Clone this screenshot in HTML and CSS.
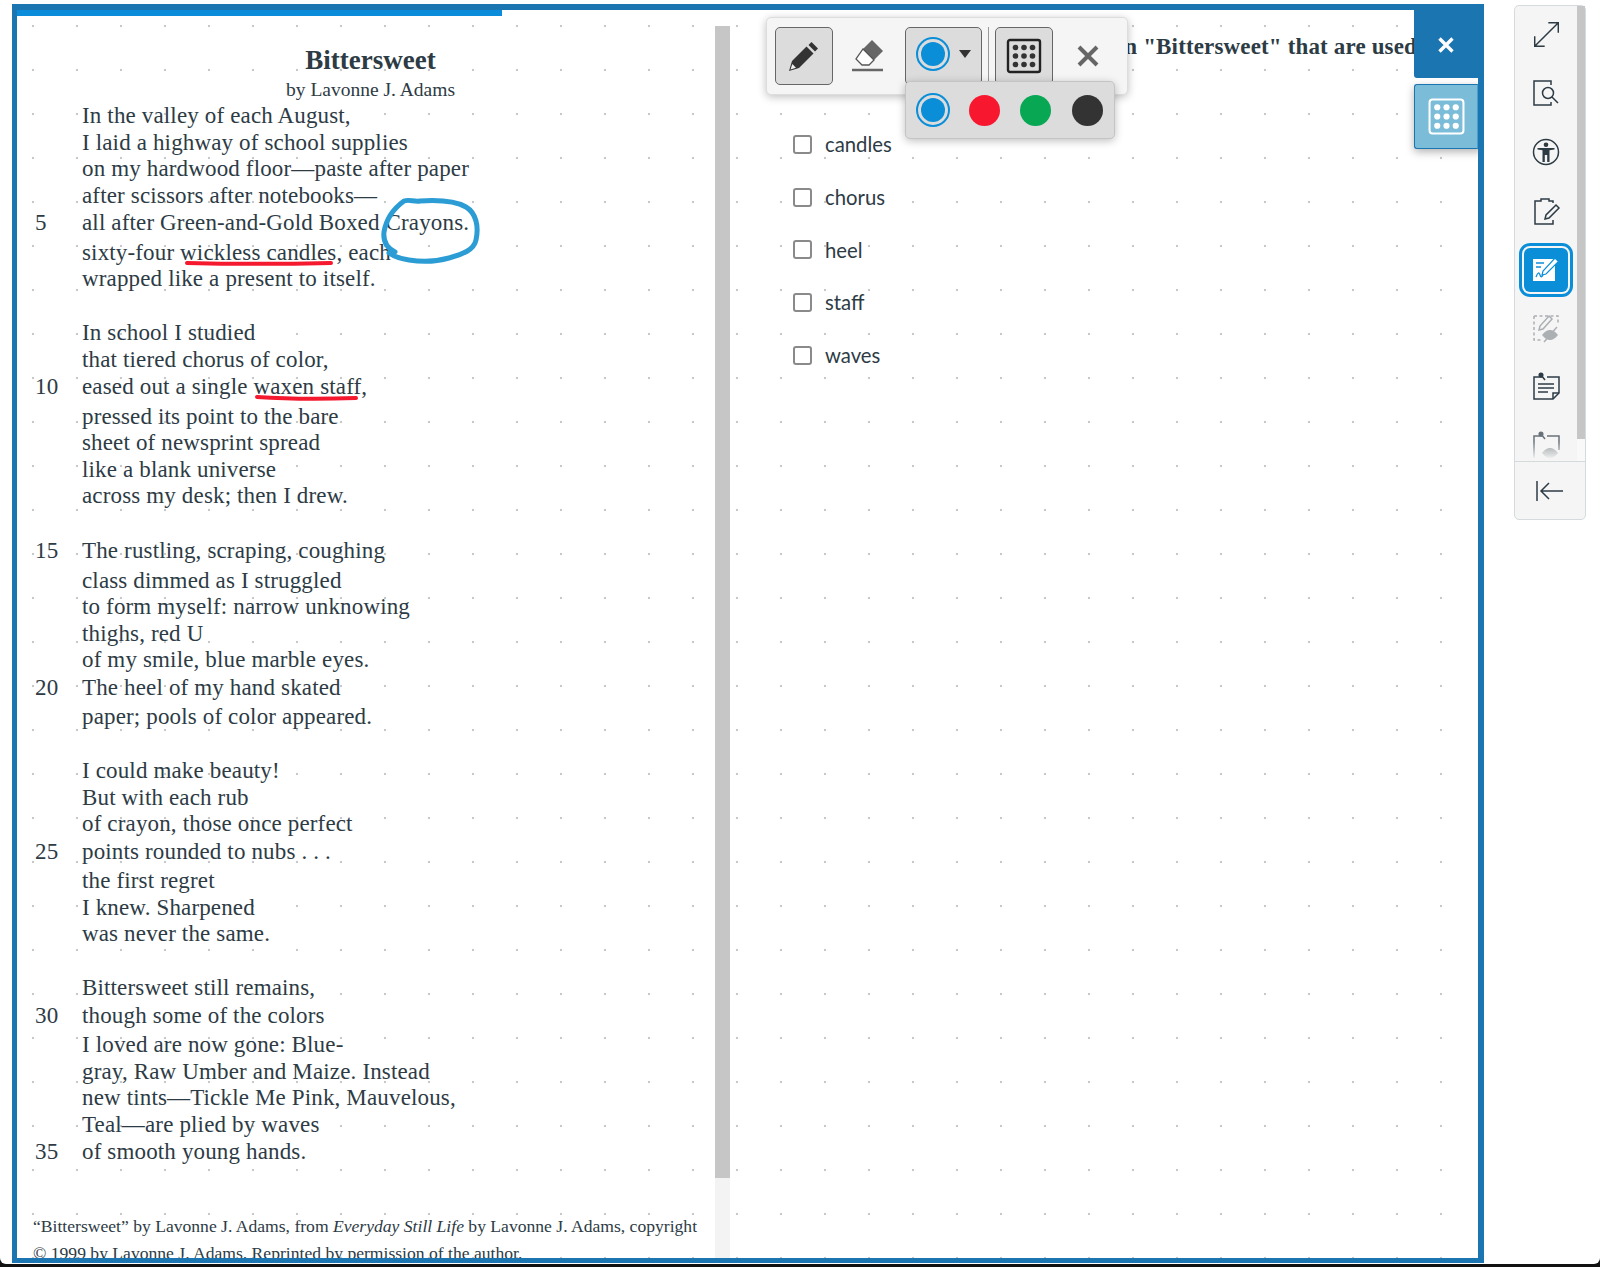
FILE: index.html
```html
<!DOCTYPE html>
<html lang="en">
<head>
  <meta charset="UTF-8">
  <title>Bittersweet</title>
  <link rel="stylesheet" href="styles.css">
</head>
<body>

<div class="screen">
  <!-- Test frame -->
  <div class="frame">
    <div class="progress"><div class="progress-fill"></div></div>
    <div class="panes">

      <!-- Poem -->
      <div class="passage">
        <div class="passage-scroll">
          <h1>Bittersweet</h1>
          <p class="byline">by Lavonne J. Adams</p>
          <div class="poem">
            <div class="line">In the valley of each August,</div>
            <div class="line">I laid a highway of school supplies</div>
            <div class="line">on my hardwood floor—paste after paper</div>
            <div class="line">after scissors after notebooks—</div>
            <div class="line num" data-n="5">all after Green-and-Gold Boxed Crayons.</div>
            <div class="line">sixty-four wickless candles, each</div>
            <div class="line end">wrapped like a present to itself.</div>
            <div class="line">In school I studied</div>
            <div class="line">that tiered chorus of color,</div>
            <div class="line num" data-n="10">eased out a single waxen staff,</div>
            <div class="line">pressed its point to the bare</div>
            <div class="line">sheet of newsprint spread</div>
            <div class="line">like a blank universe</div>
            <div class="line end">across my desk; then I drew.</div>
            <div class="line num" data-n="15">The rustling, scraping, coughing</div>
            <div class="line">class dimmed as I struggled</div>
            <div class="line">to form myself: narrow unknowing</div>
            <div class="line">thighs, red U</div>
            <div class="line">of my smile, blue marble eyes.</div>
            <div class="line num" data-n="20">The heel of my hand skated</div>
            <div class="line end">paper; pools of color appeared.</div>
            <div class="line">I could make beauty!</div>
            <div class="line">But with each rub</div>
            <div class="line">of crayon, those once perfect</div>
            <div class="line num" data-n="25">points rounded to nubs . . .</div>
            <div class="line">the first regret</div>
            <div class="line">I knew. Sharpened</div>
            <div class="line end">was never the same.</div>
            <div class="line">Bittersweet still remains,</div>
            <div class="line num" data-n="30">though some of the colors</div>
            <div class="line">I loved are now gone: Blue-</div>
            <div class="line">gray, Raw Umber and Maize. Instead</div>
            <div class="line">new tints—Tickle Me Pink, Mauvelous,</div>
            <div class="line">Teal—are plied by waves</div>
            <div class="line num" data-n="35">of smooth young hands.</div>
          </div>
          <p class="source">“Bittersweet” by Lavonne J. Adams, from <em>Everyday Still Life</em> by Lavonne J. Adams, copyright © 1999 by Lavonne J. Adams. Reprinted by permission of the author.</p>
        </div>
        <div class="scrollbar"><div class="scrollbar-thumb"></div></div>
      </div>

      <!-- Question -->
      <div class="question">
        <p class="prompt"><span class="prompt-text">Select the words in "Bittersweet" that are used</span></p>
        <div class="choices">
          <label class="choice"><span class="box"></span>candles</label>
          <label class="choice"><span class="box"></span>chorus</label>
          <label class="choice"><span class="box"></span>heel</label>
          <label class="choice"><span class="box"></span>staff</label>
          <label class="choice"><span class="box"></span>waves</label>
        </div>
      </div>
    </div>

    <!-- Pen marks drawn on the passage -->
    <svg class="ink" width="500" height="420" viewBox="0 0 500 420" fill="none" stroke-linecap="round" stroke-linejoin="round">
      <path d="M395 252c-8-4-12-11-11-20 2-12 9-23 20-31 5-2 10 1 16 0 16-1 34-1 46 6 10 6 13 19 10 33-2 10-13 14-27 18-14 4-27 4-40 2-8-1-14-3-20-7" stroke="#2b9cd4" stroke-width="5"/>
      <path d="M187 263c40 1 100 1 144 0" stroke="#f5192f" stroke-width="4"/>
      <path d="M257 397c30 2 70 2 99 1" stroke="#f5192f" stroke-width="4"/>
    </svg>

    <!-- Close and grid tabs -->
    <button class="close-tab">
      <svg width="18" height="18" viewBox="0 0 18 18"><path d="M2.500 2.500l13 13M15.500 2.500l-13 13" stroke="#fff" stroke-width="3.400"/></svg>
    </button>
    <button class="grid-tab">
      <svg width="37" height="37" viewBox="0 0 36 36"><rect x="1.500" y="1.500" width="33" height="33" rx="3" fill="none" stroke="#fff" stroke-width="2"/><g fill="#fff"><circle cx="9" cy="9" r="3"/><circle cx="18" cy="9" r="3"/><circle cx="27" cy="9" r="3"/><circle cx="9" cy="18" r="3"/><circle cx="18" cy="18" r="3"/><circle cx="27" cy="18" r="3"/><circle cx="9" cy="27" r="3"/><circle cx="18" cy="27" r="3"/><circle cx="27" cy="27" r="3"/></g></svg>
    </button>

    <!-- Drawing toolbar -->
    <div class="toolbar">
      <button class="tool active">
        <svg width="36" height="36" viewBox="0 0 36 36"><path d="M25.500 4l6.500 6.500-3 3-6.500-6.500z" fill="#333"/><path d="M20.500 8.500l7 7L13 30l-10 3 3-10z" fill="#333"/><path d="M4.500 31.500l1.800-5.500 3.700 3.700z" fill="#eee"/></svg>
      </button>
      <button class="tool">
        <svg width="36" height="36" viewBox="0 0 36 36"><path d="M22 2l11 11-9 9-11-11z" fill="#666"/><path d="M13 11l11 11-5 5h-7l-6-6z" fill="#fff" stroke="#555" stroke-width="1.300"/><path d="M2 32h31" stroke="#666" stroke-width="2.500"/></svg>
      </button>
      <button class="tool swatch-btn">
        <span class="swatch"></span>
        <span class="caret"></span>
      </button>
      <span class="tool-sep"></span>
      <button class="tool">
        <svg width="36" height="36" viewBox="0 0 36 36"><rect x="2" y="2" width="32" height="32" rx="2" fill="none" stroke="#222" stroke-width="2.400"/><g fill="#333"><circle cx="9.500" cy="9.500" r="2.800"/><circle cx="18" cy="9.500" r="2.800"/><circle cx="26.500" cy="9.500" r="2.800"/><circle cx="9.500" cy="18" r="2.800"/><circle cx="18" cy="18" r="2.800"/><circle cx="26.500" cy="18" r="2.800"/><circle cx="9.500" cy="26.500" r="2.800"/><circle cx="18" cy="26.500" r="2.800"/><circle cx="26.500" cy="26.500" r="2.800"/></g></svg>
      </button>
      <button class="tool">
        <svg width="24" height="24" viewBox="0 0 24 24"><path d="M3 3l18 18M21 3L3 21" stroke="#666" stroke-width="4"/></svg>
      </button>
    </div>

    <div class="color-menu">
      <span class="swatch"></span>
      <span class="dot red"></span>
      <span class="dot green"></span>
      <span class="dot black"></span>
    </div>
  </div>

  <!-- Right tool rail -->
  <div class="rail">
    <div class="rail-scroll">
      <div class="rail-icons">
        <div class="rail-item">
          <svg width="29" height="29" viewBox="0 0 32 32" fill="none" stroke="#2d3b45" stroke-width="1.600"><path d="M3 29L29 3M18 3h11v11M3 18v11h11"/></svg>
        </div>
        <div class="rail-item">
          <svg width="30" height="30" viewBox="0 0 30 30" fill="none" stroke="#2d3b45" stroke-width="1.500"><path d="M20 7V3H3v24h17v-3"/><circle cx="17" cy="15" r="5.500"/><path d="M21 19l6 6"/></svg>
        </div>
        <div class="rail-item">
          <svg width="30" height="30" viewBox="0 0 30 30" fill="none" stroke="#2d3b45" stroke-width="1.500"><circle cx="15" cy="15" r="12.500"/><g fill="#2d3b45" stroke="none"><circle cx="15" cy="7.800" r="2.300"/><path d="M6.500 11h17v1.500l-5 .8V25h-2.300v-7h-2.400v7h-2.300V13.300l-5-.8z"/></g></svg>
        </div>
        <div class="rail-item">
          <svg width="30" height="30" viewBox="0 0 30 30" fill="none" stroke="#2d3b45" stroke-width="1.500"><path d="M22 7V5h-4V3h-8v2H4v23h18v-4"/><path d="M25 9l3 3-10 10-4 1 1-4z"/></svg>
        </div>
        <div class="rail-item on">
          <svg width="26" height="26" viewBox="0 0 26 26"><path d="M0 2h22v22H0z" fill="#fff"/><path d="M22 1l3.500 3.500L13 17l-4 1 1-4z" fill="#fff" stroke="#0a8ed8" stroke-width="1.200"/><path d="M3 6h8M3 10h5M3 20c2-5 3-5 4-2s2 2 3 0" stroke="#0e8ed8" stroke-width="1.300" fill="none"/></svg>
        </div>
        <div class="rail-item dim">
          <svg width="30" height="30" viewBox="0 0 30 30" fill="none" stroke="#9a9fa3" stroke-width="1.500"><path d="M3 3h24v9M3 3v24h9" stroke-dasharray="3 2.500"/><path d="M18 3l3 3-9 10-4 1 1-4z"/><path d="M11 22c3-4 6-5 8-5s5 1 8 5c-3 4-6 5-8 5s-5-1-8-5z" fill="#9a9fa3" stroke="none"/><path d="M13 29L26 14"/></svg>
        </div>
        <div class="rail-item">
          <svg width="30" height="30" viewBox="0 0 30 30" fill="none" stroke="#2d3b45" stroke-width="1.500"><path d="M11 5H3v22h19l6-6V5H16"/><circle cx="10" cy="3" r="1.800" fill="#2d3b45"/><path d="M10 3l4 5M7 12h16M7 16h16M7 20h10M22 27v-6h6"/></svg>
        </div>
        <div class="rail-item fade">
          <svg width="30" height="30" viewBox="0 0 30 30" fill="none" stroke="#2d3b45" stroke-width="1.500"><path d="M11 5H3v22M16 5h12v14"/><circle cx="10" cy="3" r="1.800" fill="#2d3b45"/><path d="M10 3l4 5"/><path d="M11 22c3-4 6-5 8-5s5 1 8 5c-3 4-6 5-8 5s-5-1-8-5z" fill="#6d7478" stroke="none"/></svg>
        </div>
      </div>
      <div class="rail-bar"><div class="rail-thumb"></div></div>
    </div>
    <div class="rail-foot">
      <svg width="30" height="22" viewBox="0 0 30 22" fill="none" stroke="#2d3b45" stroke-width="1.500"><path d="M2 1v20M28 11H6M14 3l-8 8 8 8"/></svg>
    </div>
  </div>
</div>

</body>
</html>
```

FILE: styles.css
```css
/* Global */
html, body {
  margin: 0;
  height: 100%;
  background: #111;
  overflow: hidden;
}

body {
  font-family: 'Liberation Serif', serif;
  color: #2d3b45;
}

button {
  border: none;
  background: none;
  padding: 0;
}

.screen {
  height: 1264px;
  box-sizing: border-box;
  padding: 4px 14px 0 12px;
  display: flex;
  gap: 30px;
  align-items: flex-start;
  background: #fff;
  border-radius: 0 0 6px 6px;
}

/* Test frame */
.frame {
  position: relative;
  width: 1472px;
  height: 1259px;
  box-sizing: border-box;
  border: 5px solid #1b75b1;
  border-top-width: 1px;
  border-right-width: 6px;
  display: flex;
  flex-direction: column;
  overflow: hidden;
}

.progress {
  height: 11px;
  flex: none;
  box-sizing: border-box;
  background: #fff;
  border-top: 5px solid #1b75b1;
}

.progress-fill {
  width: 485px;
  height: 6px;
  background: #0a8cdb;
}

.panes {
  flex: 1;
  min-height: 0;
  display: flex;
  background-color: #fff;
  background-image: radial-gradient(circle, #c6c8ca 1.100px, transparent 1.600px);
  background-size: 44px 44px;
  background-position: -6px -12px;
}

/* Passage */
.passage {
  width: 713px;
  flex: none;
  display: flex;
}

.passage-scroll {
  flex: 1;
  overflow: hidden;
  padding: 0 16px;
}

h1 {
  margin: 28px 0 0;
  width: 675px;
  font-size: 27px;
  line-height: 32px;
  text-align: center;
}

.byline {
  margin: 2px 0 0;
  width: 675px;
  font-size: 19.500px;
  line-height: 23px;
  text-align: center;
}

.poem {
  margin-top: 2px;
  padding-left: 49px;
  font-size: 23px;
  letter-spacing: 0.150px;
}

.line {
  height: 26.500px;
  line-height: 26.500px;
  white-space: nowrap;
  position: relative;
}

/* numbered lines sit a little high in a taller row */
.line.num {
  height: 30.500px;
  line-height: 28px;
}

.line.num::before {
  content: attr(data-n);
  position: absolute;
  left: -47px;
}

.line.end {
  margin-bottom: 27.500px;
}

.source {
  margin: 44px 0 0;
  width: 675px;
  font-size: 17.600px;
  line-height: 27px;
}

.scrollbar {
  width: 15px;
  flex: none;
  margin-top: 10px;
  background: #f3f3f3;
}

.scrollbar-thumb {
  height: 1152px;
  background: #c6c6c6;
}

/* Question */
.question {
  flex: 1;
  min-width: 0;
  padding: 16px 0 0;
}

.prompt {
  margin: 0;
  width: 684px;
  height: 30px;
  overflow: hidden;
  white-space: nowrap;
  display: flex;
  justify-content: flex-end;
  font-weight: bold;
  font-size: 23px;
  letter-spacing: 0.150px;
  line-height: 30px;
}

.prompt-text {
  flex: none;
  margin-right: -3px;
}

.choices {
  margin-top: 56px;
  padding-left: 63px;
  display: flex;
  flex-direction: column;
}

.choice {
  height: 52.700px;
  display: flex;
  align-items: center;
  gap: 13px;
  font-family: Lato, sans-serif;
  font-size: 20.300px;
}

.box {
  width: 19px;
  height: 19px;
  box-sizing: border-box;
  border: 2px solid #8a8a8a;
  border-radius: 3px;
  background: #fff;
}

/* Pen marks */
.ink {
  position: absolute;
  left: -17px;
  top: -5px;
  pointer-events: none;
}

/* Tabs on the right edge */
.close-tab {
  position: absolute;
  top: 0;
  right: 0;
  width: 64px;
  height: 73px;
  box-sizing: border-box;
  padding-top: 7px;
  background: #1b75b1;
  border-bottom-left-radius: 3px;
  display: flex;
  align-items: center;
  justify-content: center;
}

.grid-tab {
  position: absolute;
  top: 79px;
  right: -4px;
  width: 68px;
  height: 65px;
  box-sizing: border-box;
  background: #7bbcd8;
  border: 1px solid #1b75b1;
  border-right: 5px solid #4aa0c8;
  border-radius: 3px 0 0 3px;
  box-shadow: 0 3px 8px rgba(0, 0, 0, 0.3);
  display: flex;
  align-items: center;
  justify-content: center;
}

/* Drawing toolbar */
.toolbar {
  position: absolute;
  left: 749px;
  top: 12px;
  width: 362px;
  height: 78px;
  box-sizing: border-box;
  padding: 9px 8px;
  background: #f5f5f5;
  border: 1px solid #ddd;
  border-radius: 5px;
  box-shadow: 0 2px 8px rgba(0, 0, 0, 0.25);
  display: flex;
  gap: 6px;
}

.tool {
  width: 58px;
  height: 58px;
  flex: none;
  box-sizing: border-box;
  border-radius: 5px;
  display: flex;
  align-items: center;
  justify-content: center;
}

.tool.active {
  background: #dcdcdc;
  border: 1px solid #666;
}

.swatch-btn {
  width: 77px;
  margin-left: 2px;
  gap: 9px;
  background: #dcdcdc;
  border: 1px solid #666;
  padding-bottom: 4px;
}

.tool-sep {
  width: 1px;
  height: 54px;
  background: #999;
  flex: none;
}

.tool-sep + .tool {
  background: #dcdcdc;
  border: 1px solid #666;
}

.swatch {
  width: 34px;
  height: 34px;
  box-sizing: border-box;
  border-radius: 50%;
  background: #0a8ed8;
  background-clip: content-box;
  padding: 3px;
  border: 2px solid #0a8ed8;
  flex: none;
}

.caret {
  width: 0;
  height: 0;
  border: 6.500px solid transparent;
  border-top: 8px solid #333;
  border-bottom: none;
}

.color-menu {
  position: absolute;
  left: 888px;
  top: 76px;
  width: 210px;
  height: 58px;
  box-sizing: border-box;
  padding: 0 10px;
  background: #dcdcdc;
  border: 1px solid #c4c4c4;
  border-radius: 5px;
  box-shadow: 0 2px 8px rgba(0, 0, 0, 0.25);
  display: flex;
  align-items: center;
  gap: 20.500px;
}

.color-menu .swatch {
  margin-right: -2px;
}

.dot {
  width: 31px;
  height: 31px;
  border-radius: 50%;
  flex: none;
}

.dot.red { background: #f7182f; }
.dot.green { background: #07a754; }
.dot.black { background: #333; }

/* Right rail */
.rail {
  width: 72px;
  height: 515px;
  margin-top: 1px;
  flex: none;
  box-sizing: border-box;
  background: #f5f5f5;
  border: 1px solid #d5dadd;
  border-radius: 5px;
  display: flex;
  flex-direction: column;
}

.rail-scroll {
  flex: 1;
  min-height: 0;
  display: flex;
  overflow: hidden;
}

.rail-icons {
  flex: 1;
  margin-top: -1px;
}

.rail-item {
  height: 58.800px;
  display: flex;
  align-items: center;
  justify-content: center;
}

.rail-item.on svg {
  background: #0a8ed8;
  padding: 9px;
  border-radius: 6px;
  outline: 3px solid #0a8ed8;
  outline-offset: 2px;
}

.rail-item.dim { opacity: 0.8; }

.rail-item.fade svg {
  opacity: 0.7;
  mask-image: linear-gradient(#000 35%, transparent 95%);
}

.rail-bar {
  width: 8px;
  flex: none;
  background: #f9f9f9;
}

.rail-thumb {
  height: 433px;
  background: #c6c6c6;
}

.rail-foot {
  height: 56px;
  flex: none;
  border-top: 1px solid #d5dadd;
  display: flex;
  align-items: center;
  justify-content: center;
  padding-top: 1px;
}
```
